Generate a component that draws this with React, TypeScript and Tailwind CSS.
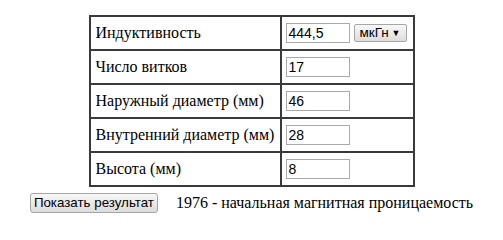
import React from "react";

const rows: { label: string; value: string; select?: boolean }[] = [
  { label: "Индуктивность", value: "444,5", select: true },
  { label: "Число витков", value: "17" },
  { label: "Наружный диаметр (мм)", value: "46" },
  { label: "Внутренний диаметр (мм)", value: "28" },
  { label: "Высота (мм)", value: "8" },
];

export default function App() {
  return (
    <div className="w-[503px] h-[222px] bg-white pt-[15px] font-['Liberation_Serif',serif] text-black">
      <table className="mx-auto border-collapse border-2 border-[#3a3a3a] w-[326px]">
        <tbody>
          {rows.map((r) => (
            <tr key={r.label} className="h-[34px]">
              <td className="border-2 border-[#3a3a3a] w-[191px] pl-[5px] pr-[3px] text-[16px] leading-[18px] whitespace-nowrap">
                {r.label}
              </td>
              <td className="border-2 border-[#3a3a3a] pl-[4px] align-middle">
                <div className="flex items-center gap-[4px]">
                  <div className="w-[64px] h-[20px] border border-[#a9a9a9] bg-white px-[2px] flex items-center font-['Liberation_Sans',sans-serif] text-[14px] leading-none">
                    {r.value}
                  </div>
                  {r.select && (
                    <div className="w-[53px] h-[18px] border border-[#a6a6a6] rounded-[2px] bg-gradient-to-b from-[#f8f8f8] to-[#dddddd] flex items-center justify-between pl-[5px] pr-[5px] font-['Liberation_Sans',sans-serif] text-[13.5px] leading-none">
                      <span>мкГн</span>
                      <span className="text-[9px]">▼</span>
                    </div>
                  )}
                </div>
              </td>
            </tr>
          ))}
        </tbody>
      </table>
      <div className="mt-[6px] flex justify-center items-center gap-[18px]">
        <div className="w-[128px] h-[20px] border border-[#a6a6a6] rounded-[3px] bg-gradient-to-b from-[#f7f7f7] to-[#dcdcdc] flex items-center justify-center font-['Liberation_Sans',sans-serif] text-[13.33px] leading-none">
          Показать результат
        </div>
        <span className="text-[16px] leading-[18px] whitespace-nowrap">
          1976 - начальная магнитная проницаемость
        </span>
      </div>
    </div>
  );
}
